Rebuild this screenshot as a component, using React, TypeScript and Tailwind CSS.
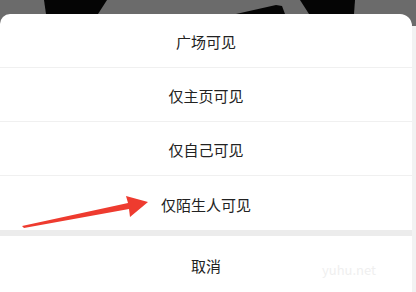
import React from "react";

const options = ["广场可见", "仅主页可见", "仅自己可见", "仅陌生人可见"];

function Backdrop() {
  return (
    <svg width="416" height="14" viewBox="0 0 416 14" className="block shrink-0">
      <rect width="416" height="14" fill="#6b6b6b" />
      <polygon points="44,0 107,0 98,14 46,14" fill="#050505" />
      <polygon points="300,0 355,0 354,14 309,14" fill="#050505" />
      <polygon points="236,14 276,5 282,6 285,14" fill="#050505" />
    </svg>
  );
}

function Arrow() {
  return (
    <svg
      width="140"
      height="40"
      viewBox="0 0 140 40"
      className="absolute left-[18px] top-[192px]"
    >
      <polygon
        points="4,34 110,11 108,4 130,10 112,25 111,17 6,36"
        fill="#ee3b2f"
      />
    </svg>
  );
}

export default function App() {
  return (
    <div
      className="relative w-[416px] h-[292px] overflow-hidden bg-[#6b6b6b] flex flex-col"
      style={{ fontFamily: '"Noto Sans CJK SC", "Noto Sans", sans-serif' }}
    >
      <Backdrop />
      <div className="flex-1 flex">
        <div className="w-[412px] bg-white rounded-tr-[12px] rounded-tl-[10px] flex flex-col">
          {options.map((o, i) => (
            <div
              key={o}
              className={
                "h-[54px] pt-1 flex items-center justify-center text-[15px] text-[#222] " +
                (i < options.length - 1 ? "border-b border-[#f0f0f0]" : "")
              }
            >
              {o}
            </div>
          ))}
          <div className="h-[6px] bg-[#ececec]" />
          <div className="flex-1 pt-1 flex items-center justify-center text-[15px] text-[#222] relative">
            取消
            <span className="absolute right-[36px] top-[24px] text-[13px] text-[#efefef]">
              yuhu.net
            </span>
          </div>
        </div>
        <div className="flex-1 bg-[#f2f2f2] mt-[12px]" />
      </div>
      <Arrow />
    </div>
  );
}
